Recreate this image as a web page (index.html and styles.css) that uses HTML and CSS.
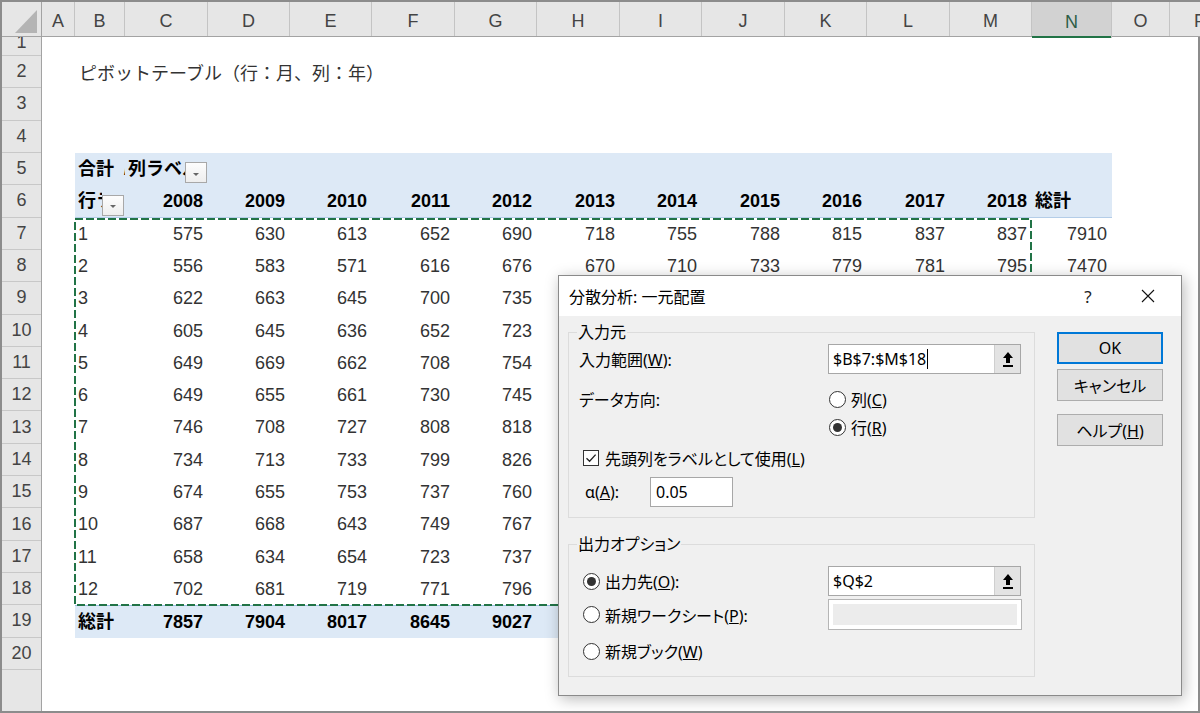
FILE: index.html
```html
<!DOCTYPE html>
<html lang="ja">
<head>
<meta charset="utf-8">
<title>分散分析: 一元配置</title>
<link rel="stylesheet" href="styles.css">
</head>
<body>
<div class="app">
  <div class="colbar">
    <div class="corner"><svg width="22" height="23" viewBox="0 0 22 23"><polygon points="22,0 22,23 0,23" fill="#b4b4b4"/></svg></div>
    <div class="ch w33">A</div>
    <div class="ch w50">B</div>
    <div class="ch w83">C</div>
    <div class="ch w82">D</div>
    <div class="ch w82">E</div>
    <div class="ch w83">F</div>
    <div class="ch w82">G</div>
    <div class="ch w83">H</div>
    <div class="ch w82">I</div>
    <div class="ch w83">J</div>
    <div class="ch w82">K</div>
    <div class="ch w83">L</div>
    <div class="ch w82">M</div>
    <div class="ch w80 sel">N</div>
    <div class="ch w58">O</div>
    <div class="ch grow">P</div>
  </div>

  <div class="main">
    <div class="rowbar">
      <div class="rh first"><span>1</span></div>
      <div class="rh">2</div>
      <div class="rh">3</div>
      <div class="rh">4</div>
      <div class="rh">5</div>
      <div class="rh">6</div>
      <div class="rh">7</div>
      <div class="rh">8</div>
      <div class="rh">9</div>
      <div class="rh">10</div>
      <div class="rh">11</div>
      <div class="rh">12</div>
      <div class="rh">13</div>
      <div class="rh">14</div>
      <div class="rh">15</div>
      <div class="rh">16</div>
      <div class="rh">17</div>
      <div class="rh">18</div>
      <div class="rh">19</div>
      <div class="rh">20</div>
      <div class="rh-fill"></div>
    </div>

    <div class="sheet">
      <div class="srow first"></div>
      <div class="srow title">ピボットテーブル（行：月、列：年）</div>
      <div class="srow"></div>
      <div class="srow"></div>

      <div class="pivot">
        <div class="prow hd">
          <div class="c l">合計&nbsp;&nbsp;/ 値</div>
          <div class="c l dd"><span class="ddtxt">列ラベル</span><span class="ddbtn"></span></div>
          <div class="c"></div><div class="c"></div><div class="c"></div><div class="c"></div>
          <div class="c"></div><div class="c"></div><div class="c"></div><div class="c"></div>
          <div class="c"></div><div class="c"></div><div class="c"></div>
        </div>
        <div class="prow hd hd2">
          <div class="c l dd"><span class="ddtxt">行ラベル</span><span class="ddbtn"></span></div>
          <div class="c">2008</div><div class="c">2009</div><div class="c">2010</div><div class="c">2011</div>
          <div class="c">2012</div><div class="c">2013</div><div class="c">2014</div><div class="c">2015</div>
          <div class="c">2016</div><div class="c">2017</div><div class="c">2018</div>
          <div class="c l">総計</div>
        </div>
        <div class="prow">
          <div class="c l">1</div>
          <div class="c">575</div><div class="c">630</div><div class="c">613</div><div class="c">652</div><div class="c">690</div>
          <div class="c">718</div><div class="c">755</div><div class="c">788</div><div class="c">815</div><div class="c">837</div><div class="c">837</div>
          <div class="c">7910</div>
        </div>
        <div class="prow">
          <div class="c l">2</div>
          <div class="c">556</div><div class="c">583</div><div class="c">571</div><div class="c">616</div><div class="c">676</div>
          <div class="c">670</div><div class="c">710</div><div class="c">733</div><div class="c">779</div><div class="c">781</div><div class="c">795</div>
          <div class="c">7470</div>
        </div>
        <div class="prow">
          <div class="c l">3</div>
          <div class="c">622</div><div class="c">663</div><div class="c">645</div><div class="c">700</div><div class="c">735</div>
        </div>
        <div class="prow">
          <div class="c l">4</div>
          <div class="c">605</div><div class="c">645</div><div class="c">636</div><div class="c">652</div><div class="c">723</div>
        </div>
        <div class="prow">
          <div class="c l">5</div>
          <div class="c">649</div><div class="c">669</div><div class="c">662</div><div class="c">708</div><div class="c">754</div>
        </div>
        <div class="prow">
          <div class="c l">6</div>
          <div class="c">649</div><div class="c">655</div><div class="c">661</div><div class="c">730</div><div class="c">745</div>
        </div>
        <div class="prow">
          <div class="c l">7</div>
          <div class="c">746</div><div class="c">708</div><div class="c">727</div><div class="c">808</div><div class="c">818</div>
        </div>
        <div class="prow">
          <div class="c l">8</div>
          <div class="c">734</div><div class="c">713</div><div class="c">733</div><div class="c">799</div><div class="c">826</div>
        </div>
        <div class="prow">
          <div class="c l">9</div>
          <div class="c">674</div><div class="c">655</div><div class="c">753</div><div class="c">737</div><div class="c">760</div>
        </div>
        <div class="prow">
          <div class="c l">10</div>
          <div class="c">687</div><div class="c">668</div><div class="c">643</div><div class="c">749</div><div class="c">767</div>
        </div>
        <div class="prow">
          <div class="c l">11</div>
          <div class="c">658</div><div class="c">634</div><div class="c">654</div><div class="c">723</div><div class="c">737</div>
        </div>
        <div class="prow">
          <div class="c l">12</div>
          <div class="c">702</div><div class="c">681</div><div class="c">719</div><div class="c">771</div><div class="c">796</div>
        </div>
        <div class="prow tot">
          <div class="c l">総計</div>
          <div class="c">7857</div><div class="c">7904</div><div class="c">8017</div><div class="c">8645</div><div class="c">9027</div>
        </div>

        <!-- copy marquee around B7:M18 -->
        <svg class="marquee" width="958" height="388" viewBox="0 0 958 388">
          <rect x="1" y="1" width="956" height="386" fill="none" stroke="#217346" stroke-width="2" stroke-dasharray="8 3"/>
        </svg>
      </div>

      <div class="srow"></div>
    </div>
  </div>

  <div class="dlg">
    <div class="dlg-title">
      <span class="tt">分散分析: 一元配置</span>
      <span class="q">?</span>
      <span class="x"><svg width="14" height="14" viewBox="0 0 14 14"><path d="M1 1 L13 13 M13 1 L1 13" stroke="#111" stroke-width="1.1" fill="none"/></svg></span>
    </div>
    <div class="dlg-body">
      <div class="dlg-main">
        <fieldset class="grp g1">
          <legend>入力元</legend>
          <div class="frow r-in">
            <span class="flabel">入力範囲(<u>W</u>):</span>
            <div class="refbox">
              <span class="val">$B$7:$M$18</span><span class="caret"></span>
              <span class="refbtn"><svg width="12" height="17" viewBox="0 0 12 17"><path d="M6 1 L11 7 H8 V12 H4 V7 H1 Z" fill="#000"/><rect x="1" y="14" width="10" height="2" fill="#000"/></svg></span>
            </div>
          </div>
          <div class="frow r-dir">
            <span class="flabel">データ方向:</span>
            <span class="radio"></span><span class="rtext">列(<u>C</u>)</span>
          </div>
          <div class="frow r-row">
            <span class="radio on"></span><span class="rtext">行(<u>R</u>)</span>
          </div>
          <div class="frow r-chk">
            <span class="check"><svg width="14" height="14" viewBox="0 0 14 14"><path d="M2.5 7.2 L5.6 10.3 L11.6 3.6" stroke="#222" stroke-width="1.3" fill="none"/></svg></span>
            <span class="rtext">先頭列をラベルとして使用(<u>L</u>)</span>
          </div>
          <div class="frow r-alpha">
            <span class="alabel">α(<u>A</u>):</span>
            <div class="tbox"><span class="val">0.05</span></div>
          </div>
        </fieldset>

        <fieldset class="grp g2">
          <legend>出力オプション</legend>
          <div class="frow r-out">
            <span class="olabel"><span class="radio on"></span><span class="rtext">出力先(<u>O</u>):</span></span>
            <div class="refbox">
              <span class="val">$Q$2</span>
              <span class="refbtn"><svg width="12" height="17" viewBox="0 0 12 17"><path d="M6 1 L11 7 H8 V12 H4 V7 H1 Z" fill="#000"/><rect x="1" y="14" width="10" height="2" fill="#000"/></svg></span>
            </div>
          </div>
          <div class="frow r-ws">
            <span class="olabel"><span class="radio"></span><span class="rtext">新規ワークシート(<u>P</u>):</span></span>
            <div class="offbox"><span class="offfill"></span></div>
          </div>
          <div class="frow r-book">
            <span class="olabel"><span class="radio"></span><span class="rtext">新規ブック(<u>W</u>)</span></span>
          </div>
        </fieldset>
      </div>

      <div class="dlg-btns">
        <button class="btn ok">OK</button>
        <button class="btn cancel">キャンセル</button>
        <button class="btn help">ヘルプ(<u>H</u>)</button>
      </div>
    </div>
  </div>
</div>
</body>
</html>
```

FILE: styles.css
```css
* { box-sizing: border-box; }

html, body {
  margin: 0;
  padding: 0;
}

body {
  width: 1200px;
  height: 713px;
  overflow: hidden;
  background: #fff;
  font-family: "Liberation Sans", "Noto Sans CJK JP", sans-serif;
}

.app {
  position: relative;
  width: 1200px;
  height: 713px;
  border-top: 2px solid #8c8c8c;
  border-left: 2px solid #8c8c8c;
  border-bottom: 2px solid #8c8c8c;
  display: flex;
  flex-direction: column;
  overflow: hidden;
}

/* ---------- column header bar ---------- */
.colbar {
  flex: none;
  display: flex;
  height: 35px;
  background: #e6e6e6;
  border-bottom: 1px solid #a3a3a3;
}

.corner {
  flex: none;
  width: 40px;
  border-right: 1px solid #a3a3a3;
  display: flex;
  align-items: flex-end;
  justify-content: flex-end;
  padding: 0 4px 3px 0;
}

.ch {
  flex: none;
  display: flex;
  align-items: center;
  justify-content: center;
  padding-top: 4px;
  border-right: 1px solid #c4c4c4;
  font-size: 18px;
  color: #444;
}

.w33 { width: 33px; }
.w50 { width: 50px; }
.w58 { width: 58px; }
.w80 { width: 80px; }
.w82 { width: 82px; }
.w83 { width: 83px; }
.grow { flex: 1; border-right: 0; justify-content: flex-start; padding-left: 24px; }

.ch.sel {
  background: #d2d2d2;
  color: #2e5e47;
  height: 36px;
  margin-bottom: -1px;
  box-shadow: inset 0 -2px 0 #217346;
}

/* ---------- body: row numbers + cells ---------- */
.main {
  flex: 1;
  display: flex;
  min-height: 0;
}

.rowbar {
  flex: none;
  width: 40px;
  display: flex;
  flex-direction: column;
  background: #e6e6e6;
  border-right: 1px solid #a3a3a3;
}

.rh {
  flex: none;
  height: 32.32px;
  display: flex;
  align-items: center;
  justify-content: center;
  border-bottom: 1px solid #c8c8c8;
  font-size: 18px;
  color: #444;
}

.rh.first {
  height: 19px;
  overflow: hidden;
  align-items: flex-start;
}

.rh.first span {
  line-height: 32.32px;
  margin-top: -11px;
}

.rh-fill { flex: 1; }

.sheet {
  flex: 1;
  border-right: 2px solid #8c8c8c;
}

.srow { height: 32.32px; }
.srow.first { height: 19px; }

.srow.title {
  padding-left: 37px;
  line-height: 32.32px;
  font-family: "Noto Sans CJK JP", sans-serif;
  font-size: 18px;
  color: #333;
}

/* ---------- pivot table ---------- */
.pivot {
  position: relative;
  margin-left: 33px;
  width: 1037px;
}

.prow {
  display: grid;
  grid-template-columns: 50px 83px 82px 82px 83px 82px 83px 82px 83px 82px 83px 82px 80px;
  height: 32.32px;
  line-height: 32.32px;
  font-size: 18px;
  color: #333;
}

.prow.hd,
.prow.tot {
  background: #dde9f6;
  color: #000;
  font-weight: bold;
}

.prow.hd2 { border-bottom: 1px solid #b4cde8; }
.prow.tot { border-top: 1px solid #9cbfe4; }

.c {
  padding: 0 5px 0 3px;
  text-align: right;
  white-space: nowrap;
  overflow: hidden;
}

.c.l { text-align: left; }

.c.dd {
  display: flex;
  align-items: flex-end;
  padding-right: 1px;
}

.ddtxt {
  flex: 1;
  align-self: stretch;
  overflow: hidden;
  white-space: nowrap;
}

.ddbtn {
  flex: none;
  position: relative;
  width: 22px;
  height: 21px;
  margin-bottom: 2px;
  border: 1px solid #a8a8a8;
  background: linear-gradient(#fdfdfd, #eeeeee);
}

.hd2 .ddbtn { margin-bottom: 1px; }

.ddbtn::after {
  content: "";
  position: absolute;
  left: 50%;
  top: 50%;
  margin-left: -3px;
  margin-top: 0;
  border-left: 3px solid transparent;
  border-right: 3px solid transparent;
  border-top: 3px solid #666;
}

.marquee {
  position: absolute;
  left: -1px;
  top: 64.64px;
  pointer-events: none;
}

/* ---------- dialog ---------- */
.dlg {
  position: absolute;
  left: 556px;
  top: 273px;
  width: 624px;
  height: 421px;
  display: flex;
  flex-direction: column;
  background: #f0f0f0;
  border: 1px solid #8a8a8a;
  box-shadow: 2px 3px 14px rgba(0, 0, 0, 0.28);
  font-family: "Noto Sans", "Noto Sans CJK JP", sans-serif;
  font-feature-settings: "palt";
  font-size: 16px;
  color: #000;
}

.dlg-title {
  flex: none;
  height: 40px;
  display: flex;
  align-items: center;
  background: #fff;
  padding: 0 10px 0 10px;
}

.tt { flex: 1; }

.q {
  width: 20px;
  text-align: center;
  font-size: 17px;
  color: #222;
}

.x {
  width: 46px;
  margin-left: 27px;
  display: flex;
  justify-content: center;
}

.dlg-body {
  flex: 1;
  display: flex;
  padding: 6px 17px 0 9px;
}

.dlg-main {
  width: 467px;
  flex: none;
}

.grp {
  margin: 0;
  min-width: 0;
  border: 1px solid #dcdcdc;
  padding: 2px 10px 10px 10px;
}

.grp legend {
  padding: 0 1px;
  margin-left: -2px;
  line-height: 20px;
}

.g2 {
  margin-top: 16px;
  padding-top: 12px;
  padding-bottom: 12px;
}

.frow {
  display: flex;
  align-items: center;
}

.flabel {
  flex: none;
  width: 249px;
}

.r-in { height: 30px; }
.r-dir { height: 26px; margin-top: 12px; }
.r-row { height: 26px; margin-top: 2px; padding-left: 249px; }
.r-chk { height: 26px; margin-top: 5px; padding-left: 4px; }
.r-alpha { height: 30px; margin-top: 6px; }

.refbox {
  flex: none;
  width: 193px;
  height: 30px;
  display: flex;
  align-items: center;
  background: #fff;
  border: 1px solid #a7a7a7;
  padding-left: 4px;
}

.val { white-space: nowrap; }

.caret {
  width: 1px;
  height: 20px;
  margin-left: 1px;
  background: #000;
}

.refbtn {
  margin-left: auto;
  width: 26px;
  height: 28px;
  display: flex;
  align-items: center;
  justify-content: center;
  background: #e3e3e3;
  border-left: 1px solid #cfcfcf;
}

.radio {
  flex: none;
  position: relative;
  width: 17px;
  height: 17px;
  margin-left: 1px;
  border: 1px solid #333;
  border-radius: 50%;
  background: #fff;
}

.radio.on::after {
  content: "";
  position: absolute;
  left: 3px;
  top: 3px;
  width: 9px;
  height: 9px;
  border-radius: 50%;
  background: #333;
}

.rtext {
  margin-left: 5px;
  white-space: nowrap;
}

.check {
  flex: none;
  width: 16px;
  height: 16px;
  display: flex;
  align-items: center;
  justify-content: center;
  border: 1px solid #333;
  background: #fff;
}

.r-chk .rtext { margin-left: 6px; }

.alabel {
  flex: none;
  width: 71px;
  padding-left: 6px;
}

.tbox {
  width: 83px;
  height: 30px;
  display: flex;
  align-items: center;
  padding-left: 5px;
  background: #fff;
  border: 1px solid #a7a7a7;
}

.olabel {
  flex: none;
  width: 249px;
  display: flex;
  align-items: center;
  padding-left: 3px;
}

.r-out { height: 30px; }
.r-ws { height: 31px; margin-top: 3px; }
.r-book { height: 26px; margin-top: 8px; }

.offbox {
  flex: none;
  width: 194px;
  height: 31px;
  padding: 4px;
  background: #fff;
  border: 1px solid #b5b5b5;
}

.offfill {
  display: block;
  height: 100%;
  background: #ececec;
}

.dlg-btns {
  flex: none;
  margin-left: 22px;
  padding-top: 10px;
  display: flex;
  flex-direction: column;
}

.btn {
  width: 106px;
  height: 32px;
  padding: 0;
  font: inherit;
  color: #000;
  background: #e1e1e1;
  border: 1px solid #adadad;
}

.btn.ok { border: 2px solid #0078d7; }
.btn.cancel { margin-top: 5px; }
.btn.help { margin-top: 13px; }
```
